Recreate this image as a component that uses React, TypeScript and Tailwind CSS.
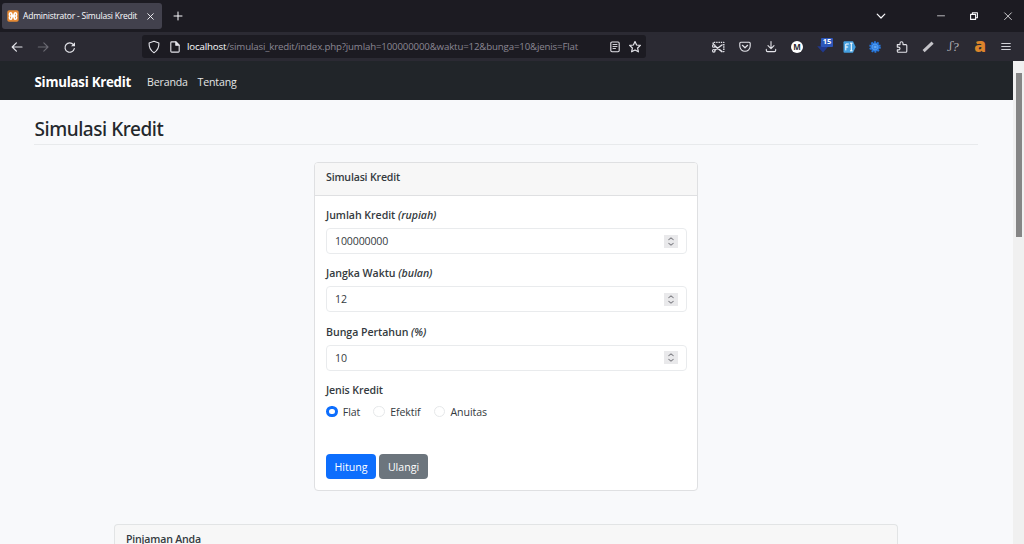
import React from "react";
import clsx from "clsx";

const stroke = {
  fill: "none",
  stroke: "currentColor",
  strokeLinecap: "round" as const,
  strokeLinejoin: "round" as const,
};

function TabStrip() {
  return (
    <div className="flex h-8 bg-[#1c1b22] text-[#fbfbfe]">
      <div className="mt-[3px] ml-0.5 flex h-[26px] w-40 items-center rounded-[3px] bg-[#42414d] pl-[5px]">
        <svg className="h-3 w-3 shrink-0" viewBox="0 0 12 12">
          <rect x="0.3" y="0.3" width="11.4" height="11.4" rx="1.8" fill="#e58a35" />
          <path
            d="M3.8 2.7C2 2.7 2 5 3.2 6C2 7 2 9.3 3.8 9.3C5 9.3 4.8 7 4.8 6.7H7.2C7.2 7 7 9.3 8.2 9.3C10 9.3 10 7 8.8 6C10 5 10 2.7 8.2 2.7C7 2.7 7.2 5 7.2 5.3H4.8C4.8 5 5 2.7 3.8 2.7Z"
            fill="none"
            stroke="#fff"
            strokeWidth="1.5"
          />
        </svg>
        <span className="ml-[4px] w-[116px] pt-px text-[8.5px] tracking-[-0.22px] whitespace-nowrap">
          Administrator - Simulasi Kredit
        </span>
        <svg className="ml-[8px] h-[7px] w-[7px]" viewBox="0 0 7 7" {...stroke}>
          <path d="M0.7 0.7L6.3 6.3M6.3 0.7L0.7 6.3" strokeWidth="0.9" />
        </svg>
      </div>
      <svg className="mt-[11px] ml-[11px] h-[10px] w-[10px]" viewBox="0 0 10 10" {...stroke}>
        <path d="M5 1V9M1 5H9" strokeWidth="1" />
      </svg>
      <div className="ml-auto flex h-[31px] items-center">
        <svg className="h-2.5 w-2.5" viewBox="0 0 10 10" {...stroke}>
          <path d="M1.2 3.2L5 7L8.8 3.2" strokeWidth="1.2" />
        </svg>
        <svg className="ml-[50px] h-2.5 w-2.5" viewBox="0 0 10 10" {...stroke}>
          <path d="M1.5 4.8H8.5" strokeWidth="0.7" />
        </svg>
        <svg className="ml-[23px] h-2.5 w-2.5" viewBox="0 0 10 10" {...stroke}>
          <path d="M1.6 3.4H6.6V8.4H1.6ZM3.4 3.2V1.7H8.4V6.7H6.9" strokeWidth="1.1" />
        </svg>
        <svg className="mr-[11.5px] ml-[23.5px] h-2.5 w-2.5" viewBox="0 0 10 10" {...stroke}>
          <path d="M1.6 1.8L8.4 8.6M8.4 1.8L1.6 8.6" strokeWidth="0.8" />
        </svg>
      </div>
    </div>
  );
}

function Tool({ children, className }: { children: React.ReactNode; className?: string }) {
  return (
    <div className={clsx("flex h-[29px] w-[26.2px] items-center justify-center", className)}>
      {children}
    </div>
  );
}

function Glyph({ children }: { children: React.ReactNode }) {
  return (
    <svg className="h-[14px] w-[14px]" viewBox="0 0 14 14" {...stroke} strokeWidth="1.1">
      {children}
    </svg>
  );
}

function Toolbar() {
  return (
    <div className="flex h-[29px] items-center bg-[#2b2a33] pl-[4px] text-[#e4e4ea]">
      <Tool>
        <Glyph>
          <path d="M12 7H2.2M6.4 2.8L2.2 7L6.4 11.2" strokeWidth="1.2" />
        </Glyph>
      </Tool>
      <Tool className="text-[#6b6a73]">
        <Glyph>
          <path d="M2.3 7H12M7.8 2.8L12 7L7.8 11.2" />
        </Glyph>
      </Tool>
      <Tool>
        <Glyph>
          <path d="M12.3 8.6A4.7 4.7 0 1 1 11.4 4.6" strokeWidth="1.2" />
          <path d="M13 2.2V6.2H9Z" fill="currentColor" stroke="none" />
        </Glyph>
      </Tool>

      <div className="ml-[59.5px] flex h-[23px] w-[504px] items-center rounded-[3px] bg-[#1c1b22] pl-[4.5px]">
        <svg className="h-[14px] w-[14px]" viewBox="0 0 14 14" {...stroke} strokeWidth="1.1">
          <path d="M7 1.3L11.9 3.1C12.1 7.8 10.8 10.6 7 12.7C3.2 10.6 1.9 7.8 2.1 3.1Z" />
        </svg>
        <svg className="ml-[7px] h-[14px] w-[14px]" viewBox="0 0 14 14" {...stroke} strokeWidth="1.1">
          <path d="M3.7 1.9H8L11.2 5.1V11.2Q11.2 12.1 10.3 12.1H3.7Q2.8 12.1 2.8 11.2V2.8Q2.8 1.9 3.7 1.9Z" />
          <path d="M7.8 1.9V5.3H11.2Z" fill="currentColor" />
        </svg>
        <span className="ml-[5.5px] w-[420.5px] pt-[2px] text-[9.7px] tracking-[-0.16px] whitespace-nowrap text-[#8b8793]">
          <span className="text-[#fbfbfe]">localhost</span>
          /simulasi_kredit/index.php?jumlah=100000000&amp;waktu=12&amp;bunga=10&amp;jenis=Flat
        </span>
        <svg className="h-[14px] w-[14px]" viewBox="0 0 14 14" {...stroke} strokeWidth="1.1">
          <rect x="2.8" y="2" width="8.4" height="9.8" rx="1.2" />
          <path d="M5 4.5H9M5 6.5H9M5 8.5H7.5" strokeWidth="0.9" />
        </svg>
        <svg className="ml-[6px] h-[14px] w-[14px]" viewBox="0 0 14 14" {...stroke} strokeWidth="1.2">
          <path d="M7 1.5L8.6 5L12.4 5.4L9.6 8L10.4 11.8L7 9.9L3.6 11.8L4.4 8L1.6 5.4L5.4 5Z" />
        </svg>
      </div>

      <div className="ml-auto flex pr-[4.5px]">
        <Tool>
          <Glyph>
            <path d="M2.2 4V2.4H12.8V11.6H11.5" strokeDasharray="1.4 0.9" strokeLinecap="butt" strokeWidth="1.4" />
            <path d="M4 6.2L11 11.6M4 10L11 5" strokeWidth="1.5" />
            <circle cx="2.8" cy="5.9" r="1.3" />
            <circle cx="2.8" cy="10.8" r="1.3" />
          </Glyph>
        </Tool>
        <Tool>
          <Glyph>
            <path d="M2.8 2.2H11.2Q12.2 2.2 12.2 3.2V6.1A5.2 5.2 0 0 1 1.8 6.1V3.2Q1.8 2.2 2.8 2.2Z" />
            <path d="M4.4 5.3L7 7.8L9.6 5.3" strokeWidth="1.2" />
          </Glyph>
        </Tool>
        <Tool>
          <Glyph>
            <path d="M7 1.5V8.5M4 5.7L7 8.6L10 5.7M2.3 9.4V10.3Q2.3 11.6 3.6 11.6H10.4Q11.7 11.6 11.7 10.3V9.4" />
          </Glyph>
        </Tool>
        <Tool>
          <div className="flex h-3 w-3 items-center justify-center rounded-full bg-white text-[8px] leading-none font-bold text-[#2b2a33]">
            M
          </div>
        </Tool>
        <Tool>
          <div className="relative h-[14px] w-[14px]">
            <svg className="h-[14px] w-[14px]" viewBox="0 0 14 14">
              <path d="M4.5 3H9.5V6.3H12.5L7 12.5L1.2 6.3H4.5Z" fill="#20398f" />
            </svg>
            <span className="absolute -top-[2px] left-[5px] flex h-[9px] w-[12px] items-center justify-center rounded-[1px] bg-[#2c56ba] text-[7.5px] leading-none font-bold text-white">
              15
            </span>
          </div>
        </Tool>
        <Tool>
          <svg className="h-3 w-[13px]" viewBox="0 0 13 12">
            <path d="M1.5 0.3H10L12.7 6L10 11.7H1.5Q0.5 11.7 0.5 10.7V1.3Q0.5 0.3 1.5 0.3Z" fill="#459fdf" />
            <path d="M2.8 9.4V3H5.8M2.8 6H5.2M7 2.2H9.6M8.3 2.2V9.8M7 9.8H9.6" fill="none" stroke="#fff" strokeWidth="1" />
          </svg>
        </Tool>
        <Tool>
          <Glyph>
            <circle cx="7" cy="7" r="4.5" fill="#2878dd" stroke="none" />
            <circle cx="7" cy="7" r="4.8" stroke="#2878dd" strokeWidth="2" strokeDasharray="1.8 1.216" strokeLinecap="butt" />
            <circle cx="7" cy="7" r="2.8" stroke="#6bb0f8" strokeWidth="0.8" strokeDasharray="1 0.7" />
            <circle cx="7" cy="7" r="1" stroke="#7dbbfa" strokeWidth="0.8" />
          </Glyph>
        </Tool>
        <Tool>
          <Glyph>
            <path d="M2.3 4.6H5V3.3A1.5 1.5 0 0 1 8 3.3V4.6H10.8Q11.8 4.6 11.8 5.6V11.2Q11.8 12.2 10.8 12.2H3.3Q2.3 12.2 2.3 11.2V9.9H3.6A1.4 1.4 0 0 0 3.6 7.1H2.3Z" />
          </Glyph>
        </Tool>
        <Tool className="text-[#c5c4c9]">
          <Glyph>
            <path d="M2.6 11.2L11.6 2.6" strokeWidth="3" strokeLinecap="butt" />
          </Glyph>
        </Tool>
        <Tool className="font-['Liberation_Serif',serif] text-[13px] text-[#b0afb6] italic">
          <span className="font-['DejaVu_Serif',serif] text-[11px]">ʃ</span>?
        </Tool>
        <Tool className="pb-[3px] font-['Open_Sans',sans-serif] text-[19px] leading-none font-extrabold text-[#dc852b]">
          a
        </Tool>
        <Tool>
          <Glyph>
            <path d="M2.7 3.5H11.3M2.7 6.5H11.3M2.7 9.5H11.3" strokeWidth="0.9" />
          </Glyph>
        </Tool>
      </div>
    </div>
  );
}

type FieldProps = {
  label: string;
  unit: string;
  value: string;
};

function NumberField({ label, unit, value }: FieldProps) {
  return (
    <div className="mb-[12.4px]">
      <div className="mb-[5px] h-[15px] text-[10.6px] leading-[15px] font-semibold tracking-[-0.04px]">
        {label} <i>{unit}</i>
      </div>
      <div className="flex h-[26px] items-center justify-between rounded-[4px] border border-[#e9ebed] bg-white pr-2 pl-2">
        <span className="pt-[2px] text-[10.6px] tracking-[-0.15px]">{value}</span>
        <div className="flex h-[13px] w-[14px] items-center justify-center bg-[#e9e9eb] text-[#85858a]">
          <svg className="h-[11px] w-2" viewBox="0 0 8 11" {...stroke}>
            <path d="M1.8 3.7L4 1.8L6.2 3.7M1.8 7.3L4 9.2L6.2 7.3" strokeWidth="1.1" />
          </svg>
        </div>
      </div>
    </div>
  );
}

function RadioOption({ label, checked, className }: { label: string; checked?: boolean; className?: string }) {
  return (
    <div className={clsx("flex items-center", className)}>
      <span
        className={clsx(
          "h-[11.5px] w-[11.5px] rounded-full bg-white",
          checked ? "border-[3px] border-[#0d6efd]" : "border border-[#e6e8ea]",
        )}
      />
      <span className="ml-[5.3px] pt-[2px] text-[10.6px] leading-[13px] tracking-[-0.07px]">{label}</span>
    </div>
  );
}

function CreditForm() {
  return (
    <div className="mx-auto h-[329px] w-[384px] overflow-hidden rounded-[4px] border border-[#dfe0e2] bg-white">
      <div className="h-[33px] border-b border-[#dfe0e2] bg-[#f7f7f7] pl-[11px] text-[10.6px] leading-[28px] font-semibold tracking-[-0.18px]">
        Simulasi Kredit
      </div>
      <div className="pt-[12px] pr-[10px] pl-[11px]">
        <NumberField label="Jumlah Kredit" unit="(rupiah)" value="100000000" />
        <NumberField label="Jangka Waktu" unit="(bulan)" value="12" />
        <NumberField label="Bunga Pertahun" unit="(%)" value="10" />
        <div className="h-[15px] text-[10.6px] leading-[15px] font-semibold tracking-[-0.1px]">Jenis Kredit</div>
        <div className="mt-[6px] flex h-[15px] items-center">
          <RadioOption label="Flat" checked />
          <RadioOption label="Efektif" className="ml-[13px]" />
          <RadioOption label="Anuitas" className="ml-[13px]" />
        </div>
        <div className="mt-[35px] flex gap-[3px] text-[10.6px] text-white">
          <button className="h-[25px] w-[50px] rounded-[4px] bg-[#0d6efd] pt-[2px]">Hitung</button>
          <button className="h-[25px] w-[49px] rounded-[4px] bg-[#6c757d] pt-[2px]">Ulangi</button>
        </div>
      </div>
    </div>
  );
}

function App() {
  return (
    <div className="h-[544px] w-[1024px] overflow-hidden bg-[#f8f9fb] font-['Open_Sans','Noto_Sans',sans-serif] text-[#343a40]">
      <TabStrip />
      <Toolbar />
      <div className="flex h-[483px]">
        <div className="w-[1013px]">
          <nav className="flex h-[39px] items-center bg-[#212529] pt-[4px] pl-[34.5px]">
            <span className="w-[112.5px] text-[13.3px] font-bold tracking-[-0.25px] whitespace-nowrap text-white">Simulasi Kredit</span>
            <span className="w-[50.5px] text-[10.6px] tracking-[-0.15px] text-[#e4e5e6]">Beranda</span>
            <span className="text-[10.6px] tracking-[-0.15px] text-[#e4e5e6]">Tentang</span>
          </nav>
          <main className="pr-[35px] pl-[34px]">
            <h1 className="mb-[17px] h-[45px] border-b border-[#e8eaec] pt-[15px] pl-[0.5px] font-['Noto_Sans',sans-serif] text-[19px] leading-[28px] font-medium tracking-[-0.45px] text-[#24282c]">
              Simulasi Kredit
            </h1>
            <CreditForm />
            <div className="mx-auto mt-[33px] h-5 w-[784px] rounded-t-[4px] border border-b-0 border-[#e2e4e5] bg-[#f7f7f7] pt-[9px] pl-[11px] text-[10.6px] leading-[10px] font-semibold tracking-[-0.2px]">
              Pinjaman Anda
            </div>
          </main>
        </div>
        <div className="flex w-[11px] justify-center bg-[#f0f0f0] pt-3">
          <div className="h-[164px] w-[6px] bg-[#858585]" />
        </div>
      </div>
    </div>
  );
}

export default App;
